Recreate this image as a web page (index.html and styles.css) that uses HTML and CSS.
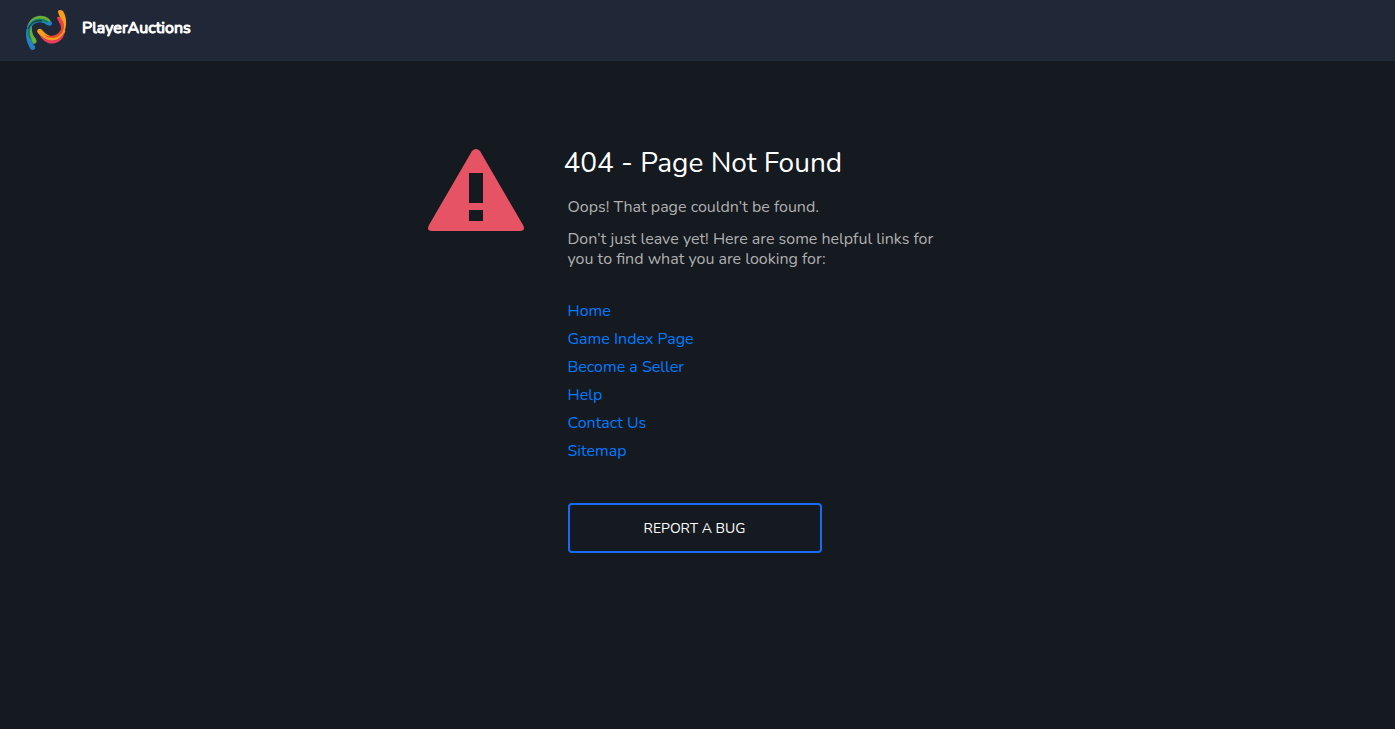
FILE: index.html
```html
<!DOCTYPE html>
<html lang="en">
<head>
    <meta charset="UTF-8">
    <meta name="viewport" content="width=device-width, initial-scale=1.0">
    <title>404 - Page Not Found</title>
    <link rel="stylesheet" href="styles.css">
</head>
<body>
    <header class="header">
        <a class="brand" href="#">
            <svg class="logo" viewBox="0 0 42 42" aria-hidden="true">
                <path fill="#67b036" d="M2 19C4 8 15 4 23 9Q27 12 25 14C18 8 10 10 7 17Q6 25 11 30Q13 34 9 35Q7 34 6 31Q1 27 2 19Z"/>
                <path fill="#2381c4" d="M1 25C1 13 11 6 22 12Q28 12 27 15Q26 18 22 16C14 10 6 15 5 22C4 29 7 33 9 36Q12 40 8 41Q5 41 4 37Q1 32 1 25Z"/>
                <path fill="#16805b" d="M4 18C8 9 16 8 23 12L23 14C14 10 8 14 5 19Q4 26 7 31L5 30Q1 24 4 18Z"/>
                <path fill="none" stroke="#202736" d="M3 20C6 13 11 11 17 12"/>
                <path fill="#e83d58" d="M32 9Q32 7 35 8C43 16 41 29 33 33C25 37 18 33 14 25L17 24C22 30 30 31 35 25Q38 19 33 11Z"/>
                <path fill="#f99d1c" d="M33 2Q35 0 38 2C42 8 42 17 39 24L37 23Q39 14 34 6Q33 4 33 2ZM12 22Q13 19 16 20L20 24C26 29 34 28 39 22C35 33 24 34 15 26Q12 24 12 22Z"/>
                <path fill="#e5482d" d="M35 8Q41 15 38 22C34 30 25 31 19 26C27 28 33 27 36 20Q38 14 35 8Z"/>
                <path fill="none" stroke="#f99d1c" d="M19 28C27 34 36 29 40 22"/>
            </svg>
            <span class="brand-name">PlayerAuctions</span>
        </a>
    </header>

    <main class="container">
        <svg class="warning-icon" viewBox="0 0 96 82" aria-hidden="true">
            <path fill="#e55364" fill-rule="evenodd" d="M44 2Q48-2 52 2L95 76Q98 82 92 82H4Q-2 82 1 76ZM41 24V54H55V24ZM41 61V72H55V61Z"/>
        </svg>
        <div class="content">
            <h1>404 - Page Not Found</h1>
            <div class="details">
                <p>Oops! That page couldn’t be found.</p>
                <p>Don’t just leave yet! Here are some helpful links for you to find what you are looking for:</p>
                <ul class="links">
                    <li><a href="#">Home</a></li>
                    <li><a href="#">Game Index Page</a></li>
                    <li><a href="#">Become a Seller</a></li>
                    <li><a href="#">Help</a></li>
                    <li><a href="#">Contact Us</a></li>
                    <li><a href="#">Sitemap</a></li>
                </ul>
                <button type="button" class="report-btn">REPORT A BUG</button>
            </div>
        </div>
    </main>
</body>
</html>
```
FILE: styles.css
```css
* {
    box-sizing: border-box;
}

body {
    margin: 0;
    background-color: #151920;
    color: #b0b0b0;
    font-family: Nunito, Lato, sans-serif;
    font-size: 16px;
    line-height: 20px;
}

.header {
    display: flex;
    align-items: center;
    height: 61px;
    padding: 0 25px 2px;
    background-color: #202736;
}

.brand {
    display: flex;
    align-items: center;
    gap: 15px;
    color: #fff;
    text-decoration: none;
}

.logo {
    width: 42px;
    height: 42px;
}

.brand-name {
    padding-bottom: 4px;
    -webkit-text-stroke: 1px #fff;
}

.container {
    display: flex;
    align-items: flex-start;
    gap: 40px;
    max-width: 540px;
    margin: 0 auto;
    padding-top: 88px;
}

.warning-icon {
    flex: none;
    width: 96px;
    height: 82px;
}

.content {
    flex: 1;
}

h1 {
    margin: 0;
    color: #fff;
    font-size: 28px;
    font-weight: normal;
    line-height: 28px;
}

.details {
    padding: 20px 4px 0;
}

p {
    max-width: 370px;
    margin: 0 0 12px;
}

.links {
    margin: 28px 0 38px;
    padding: 0;
    list-style: none;
}

.links li {
    line-height: 28px;
}

.links a {
    color: #007bff;
    text-decoration: none;
}

.links a:hover {
    text-decoration: underline;
}

.report-btn {
    width: 254px;
    max-width: 100%;
    height: 50px;
    padding-top: 2px;
    border: 2px solid #176bf8;
    border-radius: 4px;
    background: transparent;
    color: #fff;
    font-family: inherit;
    font-size: 14px;
    cursor: pointer;
}

.report-btn:hover {
    background-color: #176bf8;
}
```
